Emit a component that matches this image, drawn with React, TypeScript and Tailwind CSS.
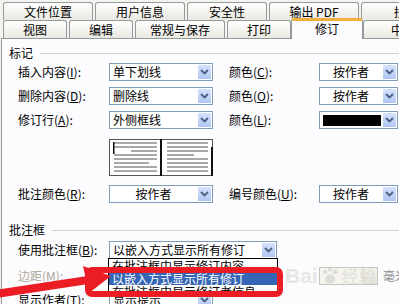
import React from "react";

const cjk = "font-['Noto_Sans_CJK_SC','Noto_Sans_CJK_JP',sans-serif]";

function Tab({ label, w, selected }: { label: string; w: string; selected?: boolean }) {
  if (selected) {
    return (
      <div
        className={`${w} relative z-10 -mb-px flex h-[21px] shrink-0 items-center justify-center rounded-t-[3px] border-x border-t-[3px] border-x-[#919b9c] border-t-[#f0b040] bg-[#fcfcfe] pb-[2px]`}
      >
        {label}
      </div>
    );
  }
  return (
    <div
      className={`${w} flex h-[18px] shrink-0 items-center justify-center rounded-t-[3px] border border-b-0 border-[#919b9c] bg-linear-to-b from-white to-[#e9e8e1]`}
    >
      {label}
    </div>
  );
}

function Label({ text, k, w = "w-[91px]", gray }: { text: string; k: string; w?: string; gray?: boolean }) {
  return (
    <div className={`${w} shrink-0 whitespace-nowrap ${gray ? "text-[#aca899]" : "text-black"}`}>
      {text}(<span className="underline">{k}</span>):
    </div>
  );
}

function Arrow() {
  return (
    <div className="flex h-full w-[15px] shrink-0 items-center justify-center border border-white bg-linear-to-b from-[#d6e2fc] to-[#b2c6f3]">
      <svg width="9" height="6" viewBox="0 0 9 6">
        <path d="M1 1 L4.5 4.5 L8 1" fill="none" stroke="#4d6185" strokeWidth="1.8" />
      </svg>
    </div>
  );
}

function Combo({ w, children, center }: { w: string; children?: React.ReactNode; center?: boolean }) {
  return (
    <div className={`${w} flex h-[18px] shrink-0 border border-[#7f9db9] bg-white`}>
      <div className={`flex flex-1 items-center whitespace-nowrap ${center ? "justify-center" : "pl-[3px]"}`}>
        {children}
      </div>
      <Arrow />
    </div>
  );
}

function GroupTitle({ title }: { title: string }) {
  return (
    <div className="ml-[6px] flex h-[14px] items-center">
      <span className="whitespace-nowrap">{title}</span>
      <div className="ml-[7px] h-px flex-1 bg-[#d5d3c8]" />
    </div>
  );
}

function Preview() {
  const left = [
    [5, 48],
    [5, 48],
    [22, 48],
    [5, 48],
    [5, 48],
    [5, 40],
    [5, 48],
    [5, 48],
  ];
  const right = [
    [58, 99],
    [58, 99],
    [58, 99],
    [58, 85],
    [58, 99],
    [58, 99],
    [58, 99],
    [58, 99],
  ];
  return (
    <svg width="104" height="37" viewBox="0 0 104 37" className="ml-[106px] block">
      <rect x="0.5" y="0.5" width="103" height="36" fill="white" stroke="#555" />
      {left.map(([a, b], i) => (
        <rect key={"l" + i} x={a} y={3 + i * 4} width={b - a} height="2" fill="#a9a9a9" />
      ))}
      {right.map(([a, b], i) => (
        <rect key={"r" + i} x={a} y={3 + i * 4} width={b - a} height="2" fill="#a9a9a9" />
      ))}
      <rect x="51" y="0" width="2" height="37" fill="#111" />
      <rect x="102" y="8" width="2" height="29" fill="#111" />
      <rect x="4" y="3" width="1.5" height="12" fill="#111" />
    </svg>
  );
}

export default function App() {
  return (
    <div className={`${cjk} relative h-[304px] w-[399px] overflow-hidden bg-[#f4f3ee] text-[12px] leading-[14px] text-black`}>
      {/* tab rows */}
      <div className="flex gap-[2px] pl-[3px] pt-[2px]">
        <Tab label="文件位置" w="w-[90px]" />
        <Tab label="用户信息" w="w-[90px]" />
        <Tab label="安全性" w="w-[80px]" />
        <Tab label="输出 PDF" w="w-[90px]" />
        <Tab label="拼写" w="w-[90px]" />
      </div>
      <div className="flex h-[18px] items-end pl-[3px]">
        <Tab label="视图" w="w-[64px]" />
        <div className="w-[2px] shrink-0" />
        <Tab label="编辑" w="w-[64px]" />
        <div className="w-[2px] shrink-0" />
        <Tab label="常规与保存" w="w-[90px]" />
        <div className="w-[2px] shrink-0" />
        <Tab label="打印" w="w-[64px]" />
        <Tab label="修订" w="w-[72px]" selected />
        <Tab label="中文" w="w-[80px]" />
      </div>

      {/* panel */}
      <div className="ml-px h-[266px] border-l border-t border-[#919b9c] bg-[#fcfcfe]">
        <div className="flex flex-col pl-px">
          <div className="mt-[7px]">
            <GroupTitle title="标记" />
          </div>
          <div className="mt-[3px] flex flex-col gap-[6px] pl-[15px]">
            <div className="flex h-[18px] items-center">
              <Label text="插入内容" k="I" />
              <Combo w="w-[104px]">单下划线</Combo>
              <div className="w-[16px] shrink-0" />
              <Label text="颜色" k="C" w="w-[90px]" />
              <Combo w="w-[79px]" center>按作者</Combo>
            </div>
            <div className="flex h-[18px] items-center">
              <Label text="删除内容" k="D" />
              <Combo w="w-[104px]">删除线</Combo>
              <div className="w-[16px] shrink-0" />
              <Label text="颜色" k="O" w="w-[90px]" />
              <Combo w="w-[79px]" center>按作者</Combo>
            </div>
            <div className="flex h-[18px] items-center">
              <Label text="修订行" k="A" />
              <Combo w="w-[104px]">外侧框线</Combo>
              <div className="w-[16px] shrink-0" />
              <Label text="颜色" k="L" w="w-[90px]" />
              <Combo w="w-[79px]">
                <div className="h-[11px] w-[58px] bg-black" />
              </Combo>
            </div>
          </div>

          <div className="mt-[10px]">
            <Preview />
          </div>

          <div className="mt-[9px] flex h-[18px] items-center pl-[15px]">
            <Label text="批注颜色" k="R" />
            <Combo w="w-[104px]" center>按作者</Combo>
            <div className="w-[16px] shrink-0" />
            <Label text="编号颜色" k="U" w="w-[90px]" />
            <Combo w="w-[79px]" center>按作者</Combo>
          </div>

          <div className="mt-[20px]">
            <GroupTitle title="批注框" />
          </div>

          <div className="mt-[4px] flex h-[18px] items-center pl-[15px]">
            <Label text="使用批注框" k="B" />
            <Combo w="w-[168px]">以嵌入方式显示所有修订</Combo>
          </div>

          <div className="mt-[8px] flex h-[18px] items-center pl-[15px]">
            <Label text="边距" k="M" gray />
            <div className="w-[210px] shrink-0" />
            <div className="flex h-[18px] w-[59px] shrink-0 border border-[#c9c7ba] bg-[#f5f4ef]">
              <div className="flex-1" />
              <div className="flex w-[15px] flex-col border-l border-[#dcdad0]">
                <div className="flex-1 bg-[#efeee8]" />
                <div className="flex-1 bg-[#e8e7e0]" />
              </div>
            </div>
            <span className="ml-[5px] whitespace-nowrap text-[#8a8a8a]">毫米</span>
          </div>

          <div className="mt-[6px] flex h-[18px] items-center pl-[15px]">
            <Label text="显示作者" k="T" />
            <Combo w="w-[104px]">显示提示</Combo>
          </div>
        </div>
      </div>

      {/* open dropdown list */}
      <div className="absolute left-[108px] top-[258px] h-[37px] w-[170px] overflow-hidden border border-black bg-white">
        <div className="h-[13px] whitespace-nowrap pl-[3px] leading-[13px]">在批注框中显示修订内容</div>
        <div className="h-[13px] whitespace-nowrap bg-[#3565b5] pl-[3px] leading-[13px] text-white">以嵌入方式显示所有修订</div>
        <div className="h-[13px] whitespace-nowrap pl-[3px] leading-[13px]">在批注框中显示修订者信息</div>
      </div>

      {/* watermark */}
      <div className="pointer-events-none absolute left-[285px] top-[265px] flex items-center gap-[2px] opacity-70">
        <span className="font-['Liberation_Sans',sans-serif] text-[21px] font-bold leading-[22px] text-[#dedede]">Bai</span>
        <svg width="20" height="20" viewBox="0 0 20 20">
          <circle cx="5" cy="6" r="2.2" fill="#d4d4d4" />
          <circle cx="10" cy="3.5" r="2.2" fill="#d4d4d4" />
          <circle cx="15" cy="6" r="2.2" fill="#d4d4d4" />
          <ellipse cx="10" cy="13" rx="5" ry="4.5" fill="#d4d4d4" />
        </svg>
        <span className="text-[17px] leading-[20px] text-[#d8d8d0]">经验</span>
      </div>

      {/* red highlight */}
      <div className="pointer-events-none absolute left-[85px] top-[267px] h-[30px] w-[198px] rounded-[7px] border-[6px] border-[#ec1c24]" />
      <svg className="pointer-events-none absolute left-0 top-[255px]" width="115" height="49" viewBox="0 0 115 49">
        <line x1="-4" y1="39" x2="88" y2="25" stroke="#ec1c24" strokeWidth="8" />
        <polygon points="111,21 83,11 89,38" fill="#ec1c24" />
      </svg>
    </div>
  );
}
